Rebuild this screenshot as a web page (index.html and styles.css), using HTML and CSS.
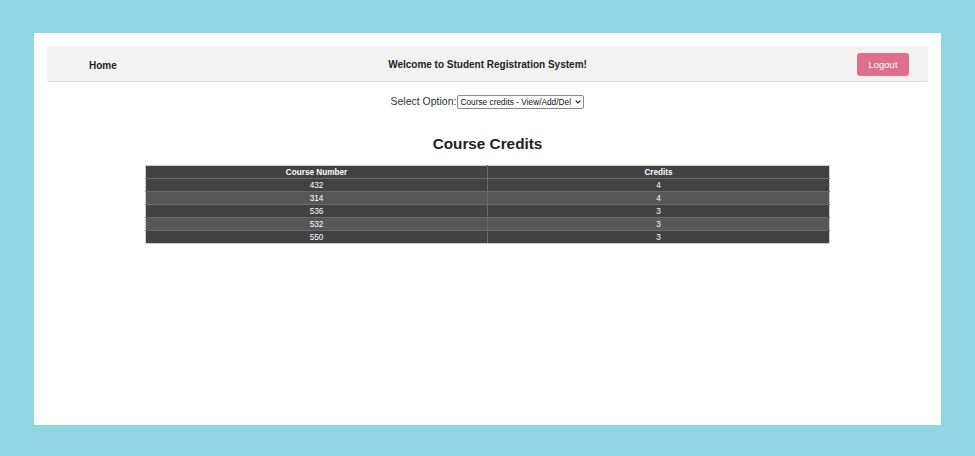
FILE: index.html
```html
<!DOCTYPE html>
<html>
<head>
<meta charset="utf-8">
<link rel="stylesheet" href="styles.css">
</head>
<body>
<div class="panel">
  <nav class="navbar">
    <div class="nav-left"><span class="home">Home</span></div>
    <div class="nav-title">Welcome to Student Registration System!</div>
    <div class="nav-right"><button class="logout">Logout</button></div>
  </nav>
  <div class="option-row">
    <label class="option-label">Select Option:</label>
    <span class="select-wrap">
      <select class="option-select">
        <option>Course credits - View/Add/Del</option>
      </select>
      <svg class="chev" width="6" height="4" viewBox="0 0 6 4"><path d="M0.7 0.7 L3 3 L5.3 0.7" fill="none" stroke="#222" stroke-width="1.2"/></svg>
    </span>
  </div>
  <h2 class="heading">Course Credits</h2>
  <table class="credits">
    <thead>
      <tr><th>Course Number</th><th>Credits</th></tr>
    </thead>
    <tbody>
      <tr class="dark"><td>432</td><td>4</td></tr>
      <tr class="light"><td>314</td><td>4</td></tr>
      <tr class="dark"><td>536</td><td>3</td></tr>
      <tr class="light"><td>532</td><td>3</td></tr>
      <tr class="dark"><td>550</td><td>3</td></tr>
    </tbody>
  </table>
</div>
</body>
</html>
```

FILE: styles.css
```css
html, body {
  margin: 0;
  padding: 0;
}
body {
  background: #92d6e6;
  padding: 33px 34px 31px 34px;
  font-family: "Liberation Sans", Arial, sans-serif;
  color: #222;
}
.panel {
  background: #ffffff;
  height: 392px;
  box-sizing: border-box;
  padding: 13px 13px;
}
.navbar {
  height: 36px;
  box-sizing: border-box;
  background: #f2f2f2;
  border-radius: 3px;
  border-bottom: 1px solid #dcdcdc;
  display: grid;
  grid-template-columns: 1fr auto 1fr;
  align-items: center;
}
.nav-left {
  padding-left: 42px;
  padding-top: 1px;
}
.home {
  font-weight: bold;
  font-size: 10px;
  color: #222;
}
.nav-title {
  font-weight: bold;
  font-size: 10px;
  color: #222;
  padding-top: 1px;
}
.nav-right {
  display: flex;
  justify-content: flex-end;
  padding-right: 19px;
}
.logout {
  width: 52px;
  height: 23px;
  background: #de6f8f;
  color: #fff;
  border: none;
  border-radius: 3px;
  font-family: "Liberation Sans", Arial, sans-serif;
  font-size: 9.5px;
  padding: 0;
  margin-top: 1px;
}
.option-row {
  display: flex;
  justify-content: center;
  align-items: center;
  margin-top: 13px;
  height: 14px;
}
.option-label {
  font-size: 10.5px;
  color: #333;
  margin-right: 1px;
  position: relative;
  top: -1px;
}
.select-wrap {
  position: relative;
  display: inline-block;
  height: 14px;
}
.option-select {
  -webkit-appearance: none;
  appearance: none;
  display: block;
  height: 14px;
  width: 127px;
  box-sizing: border-box;
  font-family: "Liberation Sans", Arial, sans-serif;
  font-size: 8.3px;
  padding: 0 0 0 2px;
  border: 1px solid #8a8a8a;
  border-radius: 2px;
  background: #fff;
  color: #111;
}
.chev {
  position: absolute;
  right: 3px;
  top: 5px;
  pointer-events: none;
}
.heading {
  text-align: center;
  font-size: 15.3px;
  font-weight: bold;
  margin: 25px 0 0 0;
  line-height: 20px;
  color: #222;
}
.credits {
  width: 685px;
  table-layout: fixed;
  margin: 11px auto 0 auto;
  border-collapse: collapse;
  border: 1px solid #d0d0d0;
  font-size: 8.2px;
  color: #fff;
}
.credits th, .credits td {
  width: 50%;
  text-align: center;
  height: 12px;
  padding: 0;
  border: 1px solid #6a6a6a;
  line-height: 11px;
}
.credits th {
  background: #424242;
  font-weight: bold;
}
.credits tr.dark td {
  background: #424242;
}
.credits tr.light td {
  background: #575757;
}
.credits tr:first-child th {
  border-top: 1px solid #d0d0d0;
}
.credits th:first-child, .credits td:first-child {
  border-left: 1px solid #d0d0d0;
}
.credits th:last-child, .credits td:last-child {
  border-right: 1px solid #d0d0d0;
}
.credits tr:last-child td {
  border-bottom: 1px solid #d0d0d0;
}
```
